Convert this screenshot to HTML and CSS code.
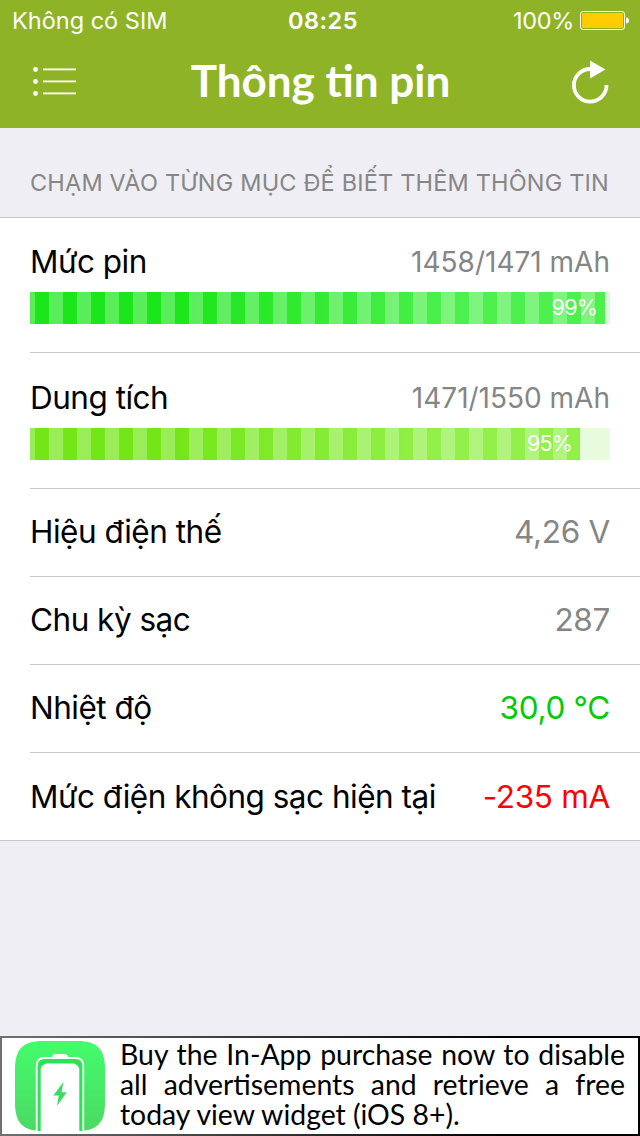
FILE: index.html
```html
<!DOCTYPE html>
<html lang="vi">
<head>
    <meta charset="UTF-8">
    <meta name="viewport" content="width=device-width, initial-scale=1.0">
    <title>Thông tin pin</title>
    <link rel="stylesheet" href="styles.css">
</head>
<body>
    <header class="header">
        <div class="status-bar">
            <span class="carrier">Không có SIM</span>
            <span class="time">08:25</span>
            <span class="power">
                <span class="power-text">100%</span>
                <svg width="49" height="20" viewBox="0 0 49 20">
                    <rect x="0.5" y="0.5" width="44" height="18" rx="2.5" fill="none" stroke="#fff"/>
                    <rect x="2" y="2" width="41" height="15" rx="1" fill="#ffcc00"/>
                    <path d="M46 6.500c2 0 3 1 3 3s-1 3-3 3z" fill="#fff"/>
                </svg>
            </span>
        </div>
        <div class="nav-bar">
            <svg class="menu-icon" width="44" height="32" viewBox="0 0 44 32">
                <g fill="#fff">
                    <circle cx="2.5" cy="3.5" r="2.4"/>
                    <circle cx="2.5" cy="15.5" r="2.4"/>
                    <circle cx="2.5" cy="27.5" r="2.4"/>
                    <rect x="10" y="2.5" width="33" height="1.8"/>
                    <rect x="10" y="14.5" width="33" height="1.8"/>
                    <rect x="10" y="26.5" width="33" height="1.8"/>
                </g>
            </svg>
            <h1 class="title">Thông tin pin</h1>
            <svg class="refresh-icon" width="38" height="44" viewBox="0 0 38 44">
                <path d="M18.5 9a16.300 16.300 0 1 0 16 16" fill="none" stroke="#fff" stroke-width="3.8"/>
                <path d="M18 0.500L33.500 9.500 18 18.500z" fill="#fff"/>
            </svg>
        </div>
    </header>

    <main>
        <h2 class="section-title">CHẠM VÀO TỪNG MỤC ĐỂ BIẾT THÊM THÔNG TIN</h2>
        <ul class="list">
            <li class="row row-bar">
                <div class="line">
                    <span class="label">Mức pin</span>
                    <span class="capacity">1458/1471 mAh</span>
                </div>
                <div class="bar bar-level">
                    <div class="fill" style="width: 575px"><span>99%</span></div>
                </div>
            </li>
            <li class="row row-bar">
                <div class="line">
                    <span class="label">Dung tích</span>
                    <span class="capacity">1471/1550 mAh</span>
                </div>
                <div class="bar bar-capacity">
                    <div class="fill" style="width: 550px"><span>95%</span></div>
                </div>
            </li>
            <li class="row">
                <span class="label">Hiệu điện thế</span>
                <span class="value">4,26 V</span>
            </li>
            <li class="row">
                <span class="label">Chu kỳ sạc</span>
                <span class="value">287</span>
            </li>
            <li class="row">
                <span class="label">Nhiệt độ</span>
                <span class="value good">30,0 °C</span>
            </li>
            <li class="row">
                <span class="label">Mức điện không sạc hiện tại</span>
                <span class="value bad">-235 mA</span>
            </li>
        </ul>
    </main>

    <footer class="banner">
        <svg class="app-icon" width="90" height="90" viewBox="0 0 90 90">
            <defs>
                <linearGradient id="app-bg" x1="0" y1="0" x2="0" y2="1">
                    <stop offset="0" stop-color="#43fc6b"/>
                    <stop offset="1" stop-color="#4cd964"/>
                </linearGradient>
            </defs>
            <path d="M28 0H62C82 0 90 8 90 28V62C90 82 82 90 62 90H28C8 90 0 82 0 62V28C0 8 8 0 28 0z" fill="url(#app-bg)"/>
            <path d="M36 17.500l2-3.500q0-1 1.500-1h11q1.500 0 1.500 1l2 3.500z" fill="#fff"/>
            <path d="M21.700 90V25q0-8 8-8h30.600q8 0 8 8v65" fill="#2be354" stroke="#fff" stroke-width="1.800"/>
            <path d="M25.700 90V28q0-2 2-3.500t4-2h26.600q2 0 4 2t2 3.500v62z" fill="#fff"/>
            <path d="M48.500 41L38.300 54.500h5.500L42 65 51.700 51.200h-5.200z" fill="#38dc60"/>
        </svg>
        <p class="banner-text">Buy the In-App purchase now to disable all advertisements and retrieve a free today view widget (iOS 8+).</p>
    </footer>
</body>
</html>
```
FILE: styles.css
```css
* {
    box-sizing: border-box;
}
body {
    display: flex;
    flex-direction: column;
    height: 100vh;
    margin: 0;
    background-color: #efeef4;
    font-family: Inter, "Liberation Sans", sans-serif;
    color: #000;
}
svg {
    display: block;
    flex: none;
}
.header {
    height: 128px;
    background-color: #8fb326;
    color: #fff;
}
.status-bar {
    display: grid;
    grid-template-columns: 1fr auto 1fr;
    align-items: center;
    height: 40px;
    padding: 1px 11px 0 12px;
    font-size: 23.5px;
    line-height: 40px;
}
.time {
    padding-left: 5px;
    font-weight: 600;
    letter-spacing: 0.5px;
}
.power {
    display: flex;
    justify-content: flex-end;
    align-items: center;
    gap: 6px;
}
.power-text {
    letter-spacing: -0.3px;
}
.nav-bar {
    display: grid;
    grid-template-columns: 1fr auto 1fr;
    align-items: center;
    height: 84px;
    padding: 0 30px 0 33px;
}
.title {
    margin: 0;
    padding: 0 2px 5px 0;
    font-family: Lato, sans-serif;
    font-size: 44px;
    font-weight: 700;
    line-height: 52px;
}
.refresh-icon {
    justify-self: end;
}
.section-title {
    height: 90px;
    margin: 0;
    padding: 40px 30px 0;
    border-bottom: 1px solid #c8c7cc;
    color: #868686;
    font-size: 23.5px;
    font-weight: 400;
    letter-spacing: 0.18px;
    line-height: 30px;
    white-space: nowrap;
}
.list {
    margin: 0;
    padding: 0 0 0 30px;
    border-bottom: 1px solid #c8c7cc;
    background-color: #fff;
    list-style: none;
}
.row {
    display: flex;
    justify-content: space-between;
    align-items: center;
    height: 88px;
    padding: 0 30px 2px 0;
    border-bottom: 1px solid #c8c7cc;
    font-size: 31.5px;
    white-space: nowrap;
}
.row:last-child {
    height: 87px;
    padding-bottom: 1px;
    border-bottom: none;
}
.row-bar {
    display: block;
    height: 136px;
    padding-top: 24px;
}
.row-bar:first-child {
    height: 135px;
    padding-top: 23px;
}
.line {
    display: flex;
    justify-content: space-between;
    align-items: center;
    height: 40px;
    margin-bottom: 11px;
}
.label {
    letter-spacing: -0.5px;
}
.capacity {
    padding-top: 2px;
    color: #858585;
    font-size: 28px;
}
.value {
    color: #858585;
    letter-spacing: -0.3px;
}
.good {
    color: #00cc00;
}
.bad {
    color: #f00;
}
.bar {
    height: 32px;
}
.bar-level {
    background-color: #dcfbdc;
}
.bar-capacity {
    background-color: #e8fbdc;
}
.fill {
    height: 32px;
    padding-right: 8px;
    color: #fff;
    font-size: 21.5px;
    letter-spacing: -0.8px;
    line-height: 31px;
    text-align: right;
}
/* white stripes over the bar colour */
.bar-level .fill {
    background: repeating-linear-gradient(to right, rgba(255, 255, 255, 0.28) 0 14px, transparent 14px 28px) -9px 0 / 700px 100%,
        linear-gradient(to right, #1be61b 25%, #4df04d 75%);
}
.bar-capacity .fill {
    background: repeating-linear-gradient(to right, rgba(255, 255, 255, 0.28) 0 14px, transparent 14px 28px) -9px 0 / 700px 100%,
        linear-gradient(to right, #73e617 25%, #93f04b 75%);
}
.banner {
    display: flex;
    height: 100px;
    margin-top: auto;
    padding: 3px 13px;
    border: 2px solid;
    border-image: linear-gradient(to right, #707070, #000 80%) 1;
    background-color: #fff;
}
.banner-text {
    flex: 1;
    margin: -2px 0 0 15px;
    font-family: Lato, sans-serif;
    font-size: 28.4px;
    line-height: 30px;
    text-align: justify;
}
```
